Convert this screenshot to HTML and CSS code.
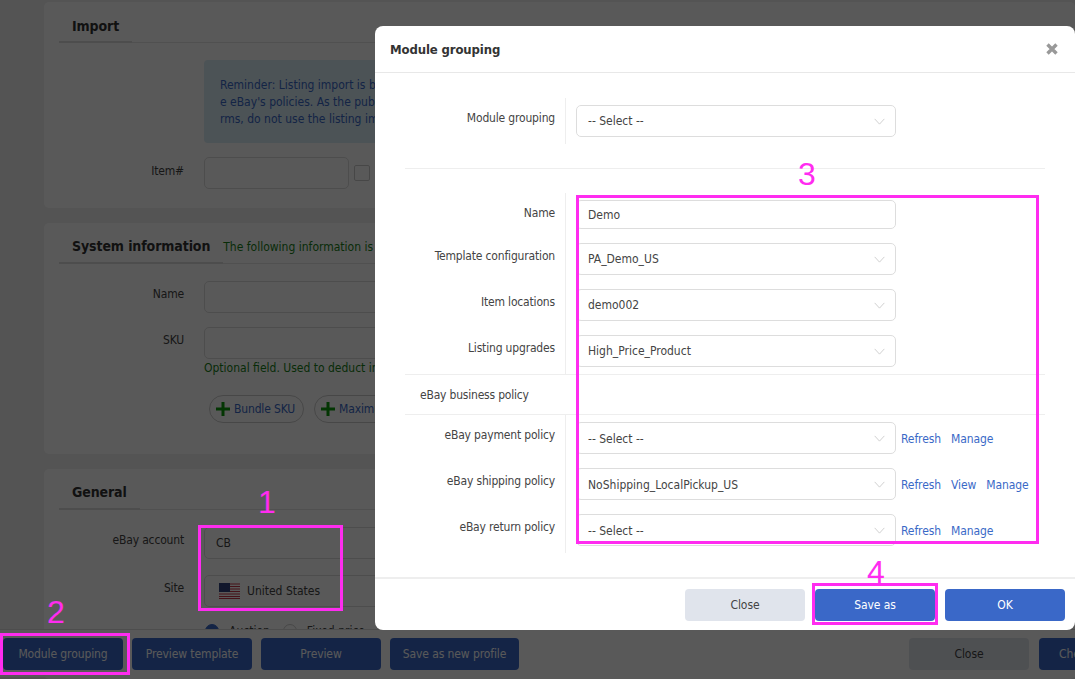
FILE: index.html
```html
<!DOCTYPE html>
<html lang="en">
<head>
<meta charset="utf-8">
<title>Module grouping</title>
<link rel="stylesheet" href="styles.css">
</head>
<body>
<div class="page">
  <section class="card card-import">
    <div class="card-head"><h2 class="tab">Import</h2></div>
    <div class="alert">Reminder: Listing import is based on your account and must comply with<br>e eBay's policies. As the publisher you are responsible for all listing te<br>rms, do not use the listing import to copy other sellers' content.</div>
    <div class="form-row"><label class="lab">Item#</label><input class="inp inp-short" type="text"><span class="check"></span></div>
  </section>
  <section class="card card-system">
    <div class="card-head"><h2 class="tab">System information</h2><span class="note head-note">The following information is only used internally</span></div>
    <div class="form-row"><label class="lab">Name</label><input class="inp" type="text"></div>
    <div class="form-row sku-row"><label class="lab">SKU</label><input class="inp" type="text"></div>
    <div class="note sku-note">Optional field. Used to deduct inventory</div>
    <div class="pills">
      <span class="pill"><svg class="plus" viewBox="0 0 14 14"><path d="M7 0v14M0 7h14" stroke="#0a9a0a" stroke-width="3"/></svg>Bundle SKU</span>
      <span class="pill"><svg class="plus" viewBox="0 0 14 14"><path d="M7 0v14M0 7h14" stroke="#0a9a0a" stroke-width="3"/></svg>Maximum quantity</span>
    </div>
  </section>
  <section class="card card-general">
    <div class="card-head"><h2 class="tab">General</h2></div>
    <div class="form-row"><label class="lab">eBay account</label><div class="inp val">CB</div></div>
    <div class="form-row site-row"><label class="lab">Site</label><div class="inp val">
      <svg class="flag" width="21" height="16" viewBox="0 0 21 16"><rect width="21" height="16" fill="#fff"/><path d="M0 1h21M0 3.5h21M0 6h21M0 8.500h21M0 11h21M0 13.500h21M0 15.500h21" stroke="#c8384a" stroke-width="1.200"/><rect width="11" height="9" fill="#33447f"/></svg>
      United States</div></div>
    <div class="radios"><span class="radio on"></span><span class="radio-text">Auction</span><span class="radio"></span><span class="radio-text">Fixed price</span></div>
  </section>
</div>

<div class="actionbar">
  <button class="btn primary">Module grouping</button>
  <button class="btn primary">Preview template</button>
  <button class="btn primary">Preview</button>
  <button class="btn primary auto">Save as new profile</button>
  <span class="spacer"></span>
  <button class="btn muted">Close</button>
  <button class="btn primary check-btn">Check</button>
</div>

<div class="overlay"></div>

<div class="modal">
  <header class="modal-head">
    <h3 class="modal-title">Module grouping</h3>
    <svg class="modal-x" viewBox="0 0 12 12"><path d="M1.500 1.500l9 9M10.500 1.500l-9 9" stroke="#999" stroke-width="3.400"/></svg>
  </header>
  <div class="modal-body">
    <div class="m-row"><div class="m-label">Module grouping</div><div class="m-ctl"><div class="sel">-- Select --<svg class="chev" viewBox="0 0 12 8"><path d="M.5 1l5.500 6 5.500-6" fill="none" stroke="#c9c9c9"/></svg></div></div></div>
    <hr class="m-hr">
    <div class="m-row name-row"><div class="m-label">Name</div><div class="m-ctl"><div class="sel name-input">Demo</div></div></div>
    <div class="m-row"><div class="m-label">Template configuration</div><div class="m-ctl"><div class="sel">PA_Demo_US<svg class="chev" viewBox="0 0 12 8"><path d="M.5 1l5.500 6 5.500-6" fill="none" stroke="#c9c9c9"/></svg></div></div></div>
    <div class="m-row"><div class="m-label">Item locations</div><div class="m-ctl"><div class="sel">demo002<svg class="chev" viewBox="0 0 12 8"><path d="M.5 1l5.500 6 5.500-6" fill="none" stroke="#c9c9c9"/></svg></div></div></div>
    <div class="m-row"><div class="m-label">Listing upgrades</div><div class="m-ctl"><div class="sel">High_Price_Product<svg class="chev" viewBox="0 0 12 8"><path d="M.5 1l5.500 6 5.500-6" fill="none" stroke="#c9c9c9"/></svg></div></div></div>
    <div class="m-section">eBay business policy</div>
    <div class="m-row policy"><div class="m-label">eBay payment policy</div><div class="m-ctl"><div class="sel">-- Select --<svg class="chev" viewBox="0 0 12 8"><path d="M.5 1l5.500 6 5.500-6" fill="none" stroke="#c9c9c9"/></svg></div><a class="lnk">Refresh</a><a class="lnk">Manage</a></div></div>
    <div class="m-row policy"><div class="m-label">eBay shipping policy</div><div class="m-ctl"><div class="sel">NoShipping_LocalPickup_US<svg class="chev" viewBox="0 0 12 8"><path d="M.5 1l5.500 6 5.500-6" fill="none" stroke="#c9c9c9"/></svg></div><a class="lnk">Refresh</a><a class="lnk">View</a><a class="lnk">Manage</a></div></div>
    <div class="m-row policy"><div class="m-label">eBay return policy</div><div class="m-ctl"><div class="sel">-- Select --<svg class="chev" viewBox="0 0 12 8"><path d="M.5 1l5.500 6 5.500-6" fill="none" stroke="#c9c9c9"/></svg></div><a class="lnk">Refresh</a><a class="lnk">Manage</a></div></div>
  </div>
  <footer class="modal-foot">
    <button class="btn muted">Close</button>
    <button class="btn primary">Save as</button>
    <button class="btn primary">OK</button>
  </footer>
</div>

<div class="mark mark-1"></div><span class="num num-1">1</span>
<div class="mark mark-2"></div><span class="num num-2">2</span>
<div class="mark mark-3"></div><span class="num num-3">3</span>
<div class="mark mark-4"></div><span class="num num-4">4</span>
</body>
</html>
```
FILE: styles.css
```css
* { box-sizing: border-box; }
html, body { margin: 0; height: 679px; overflow: hidden; }
body {
  position: relative;
  background: #f0f0f0;
  font-family: "DejaVu Sans Condensed", "DejaVu Sans", sans-serif;
  font-size: 12px;
  color: #444;
}
.page { padding: 2px 0 0 44px; }
.card { background: #fff; border-radius: 5px; padding: 0 15px; margin-bottom: 15px; height: 206px; }
.card-system { height: 231px; }
.card-general { height: 210px; margin-bottom: 0; overflow: hidden; }
.card-head { display: flex; align-items: flex-end; height: 41px; border-bottom: 1px solid #e6e6e6; }
.tab { margin: 0 0 -1px; padding: 0 13px 5px; font-size: 14px; letter-spacing: -.1px; line-height: 20px; font-weight: bold; color: #333; border-bottom: 2px solid #ddd; }
.card-system .tab, .card-general .tab { padding-bottom: 6px; }
.note { color: #188018; }
.head-note { padding: 0 0 7px 0; line-height: 17px; }
.alert { margin: 17px 0 14px 145px; width: 560px; height: 83px; padding: 17px 16px 0; background: #d9edf7; border-radius: 4px; color: #3a69c7; line-height: 17px; white-space: nowrap; }
.form-row { display: flex; align-items: flex-start; }
.card-system .form-row { margin-top: 17px; }
.card-system .sku-row { margin-top: 14px; }
.lab { width: 125px; margin-right: 20px; padding-top: 5px; line-height: 18px; letter-spacing: -.17px; text-align: right; color: #444; }
.card-system .lab, .card-general .lab { padding-top: 4px; }
.inp { width: 300px; height: 32px; border: 1px solid #ddd; border-radius: 5px; background: #fff; }
.inp-short { width: 145px; }
.val { display: flex; align-items: center; gap: 7px; padding-left: 11px; }
.check { width: 16px; height: 16px; margin: 8px 0 0 5px; border: 1px solid #ccc; border-radius: 2px; }
.sku-note { margin: 1px 0 0 145px; line-height: 16px; }
.pills { display: flex; gap: 10px; margin: 19px 0 0 150px; }
.pill { display: flex; align-items: center; gap: 4px; height: 28px; padding: 0 8px 0 6px; border: 1px solid #ccc; border-radius: 14px; letter-spacing: -.15px; color: #3a69c7; white-space: nowrap; }
.plus { width: 14px; height: 14px; }
.card-general .form-row { margin-top: 17px; }
.card-general .site-row { margin-top: 16px; }
.flag { flex: none; margin-left: 3px; }
.radios { display: flex; align-items: center; margin: 17px 0 0 146px; }
.radio { flex: none; width: 14px; height: 14px; border: 1px solid #ccc; border-radius: 50%; }
.radio.on { background: #3a69c7; border-color: #3a69c7; }
.radio-text { margin: 0 13px 0 10px; }
.actionbar {
  position: absolute; left: 0; top: 629px; width: 1075px; height: 48px;
  display: flex; align-items: flex-start; gap: 9px; padding: 8px 0 0 3px;
  background: #fff; border-top: 1px solid #ddd; overflow: hidden;
}
.spacer { flex: none; width: 372px; }
.btn { flex: none; width: 120px; height: 32px; border: 0; border-radius: 4px; padding: 0; font: inherit; letter-spacing: -.1px; }
.btn.auto { width: 129px; }
.btn.check-btn { margin-left: 1px; padding-left: 20px; text-align: left; }
.primary { background: #3a68c8; color: #fff; }
.muted { background: #e0e4ec; color: #444; }
.overlay { position: absolute; inset: 0; background: rgba(0, 0, 0, .65); }
.modal {
  position: absolute; left: 375px; top: 26px; width: 700px; height: 604px;
  display: flex; flex-direction: column;
  background: #fff; border-radius: 8px; overflow: hidden;
}
.modal-head { flex: none; display: flex; align-items: center; justify-content: space-between; height: 47px; padding: 0 17px 0 15px; border-bottom: 1px solid #e8e8e8; }
.modal-title { margin: 0; font-size: 13px; letter-spacing: -.12px; font-weight: bold; color: #333; }
.modal-x { width: 12px; height: 12px; }
.modal-body { flex: 1; padding: 25px 30px 0; overflow: hidden; }
.m-row { display: flex; height: 46px; }
.m-row.name-row { height: 43px; }
.m-label { width: 161px; padding: 10px 10px 0 0; border-right: 1px solid #eee; line-height: 20px; letter-spacing: -.17px; text-align: right; color: #444; }
.m-ctl { display: flex; align-items: flex-start; padding: 7px 0 0 10px; }
.sel { position: relative; flex: none; display: flex; align-items: center; width: 320px; height: 32px; padding-left: 11px; border: 1px solid #ddd; border-radius: 5px; color: #444; }
.policy .sel { padding-top: 2px; }
.name-input { height: 29px; }
.chev { position: absolute; right: 10px; top: 12px; width: 11px; height: 7px; }
.m-hr { height: 1px; margin: 24px 0; border: 0; background: #eee; }
.m-section { height: 41px; padding-left: 15px; border-top: 1px solid #eee; border-bottom: 1px solid #eee; line-height: 40px; letter-spacing: -.2px; color: #444; }
.lnk { margin-left: 5px; padding-right: 5px; line-height: 34px; letter-spacing: -.1px; color: #3a69c7; }
.modal-foot { flex: none; display: flex; justify-content: flex-end; gap: 10px; height: 53px; padding: 10px 10px 0 0; border-top: 2px solid #eee; }
.mark { position: absolute; border: 3px solid #ff2cf0; }
.mark-1 { left: 198px; top: 525px; width: 145px; height: 86px; }
.mark-2 { left: 0; top: 633px; width: 130px; height: 42px; }
.mark-3 { left: 576px; top: 195px; width: 463px; height: 349px; }
.mark-4 { left: 812px; top: 583px; width: 126px; height: 42px; }
.num { position: absolute; font-family: "Liberation Sans", sans-serif; font-size: 32px; line-height: 32px; color: #ff2cf0; }
.num-1 { left: 258px; top: 486px; }
.num-2 { left: 47px; top: 596px; }
.num-3 { left: 798px; top: 158px; }
.num-4 { left: 867px; top: 556px; }
```
